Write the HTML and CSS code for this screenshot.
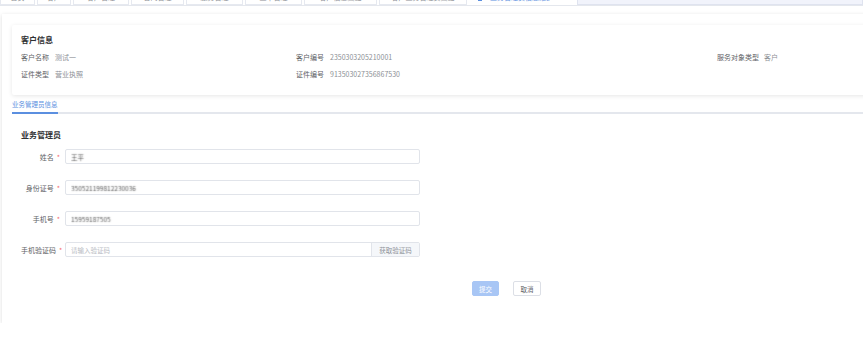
FILE: index.html
```html
<!DOCTYPE html>
<html lang="zh-CN">
<head>
  <meta charset="UTF-8" />
  <meta name="viewport" content="width=device-width, initial-scale=1.0" />
  <title>业务管理员信息</title>
  <link rel="stylesheet" href="styles.css">
</head>
<body>
  <div class="tabbar">
    <div class="tab" style="width:35px"><span>首页</span></div>
    <div class="tab" style="width:34px"><span>客户</span></div>
    <div class="tab" style="width:56px"><span>客户管理</span></div>
    <div class="tab" style="width:53px"><span>合同管理</span></div>
    <div class="tab" style="width:57px"><span>服务管理</span></div>
    <div class="tab" style="width:57px"><span>工单管理</span></div>
    <div class="tab" style="width:73px"><span>客户信息变更</span></div>
    <div class="tab" style="width:88px"><span>客户业务管理员变更</span></div>
    <div class="tab active" style="width:106px"><i class="tab-icon"></i><span>业务管理员信息维护</span></div>
    <div class="tab-rest"></div>
  </div>

  <div class="page">
    <div class="panel">
      <div class="info-card">
        <div class="card-title">客户信息</div>
        <div class="info-grid">
          <div class="info-item"><span class="info-label">客户名称</span><span class="info-value">测试一</span></div>
          <div class="info-item"><span class="info-label">客户编号</span><span class="info-value">2350303205210001</span></div>
          <div class="info-item"><span class="info-label wide">服务对象类型</span><span class="info-value">客户</span></div>
          <div class="info-item"><span class="info-label">证件类型</span><span class="info-value">营业执照</span></div>
          <div class="info-item"><span class="info-label">证件编号</span><span class="info-value">913503027356867530</span></div>
        </div>
      </div>

      <div class="subtabs">
        <div class="subtab active">业务管理员信息</div>
      </div>

      <div class="section">
        <div class="section-title">业务管理员</div>
        <form class="form">
          <div class="form-row">
            <label class="form-label">姓名<em>*</em></label>
            <div class="input"><input class="blur" value="王平"></div>
          </div>
          <div class="form-row">
            <label class="form-label">身份证号<em>*</em></label>
            <div class="input"><input class="blur" value="350521199812230036"></div>
          </div>
          <div class="form-row">
            <label class="form-label">手机号<em>*</em></label>
            <div class="input"><input class="blur" value="15959187505"></div>
          </div>
          <div class="form-row">
            <label class="form-label">手机验证码<em>*</em></label>
            <div class="input"><input placeholder="请输入验证码"><button type="button" class="append">获取验证码</button></div>
          </div>
          <div class="actions">
            <button type="button" class="btn primary">提交</button>
            <button type="button" class="btn">取消</button>
          </div>
        </form>
      </div>
    </div>
  </div>
</body>
</html>
```

FILE: styles.css
```css
* {
  box-sizing: border-box;
}

body {
  margin: 0;
  overflow: hidden;
  background: #fff;
  font-family: "Noto Sans CJK SC", "Noto Sans", sans-serif;
  font-size: 7px;
  color: #606266;
}

/* top tab strip, mostly scrolled out of view */
.tabbar {
  display: flex;
  height: 6px;
  border-bottom: 1px solid #e4e7ed;
  overflow: hidden;
}

.tab {
  flex-shrink: 0;
  display: flex;
  align-items: flex-end;
  justify-content: center;
  height: 5px;
  margin-right: 2px;
  border: 1px solid #e6e9f0;
  border-top: none;
  background: #fff;
  color: #8a8d93;
}

.tab span {
  line-height: 10px;
  margin-bottom: 2px;
}

.tab.active {
  justify-content: flex-start;
  padding-left: 8px;
  gap: 8px;
  color: #5b8fe0;
  border-color: #fff;
}

.tab-icon {
  width: 4px;
  height: 2px;
  margin-bottom: 3px;
  background: #5b8fe0;
}

.tab-rest {
  flex: 1;
  height: 5px;
  background: #f1f3fb;
  border: 1px solid #dfe3ef;
  border-top: none;
}

.page {
  padding: 8px 0 0 2px;
}

.panel {
  width: 900px;
  height: 309px;
  padding: 11px 0 0 10px;
  background: #fff;
  box-shadow: 0 1px 4px rgba(0, 0, 0, 0.14);
}

/* customer info card */
.info-card {
  height: 70px;
  padding: 10px 9px;
  border-radius: 2px;
  box-shadow: 0 1px 4px rgba(0, 0, 0, 0.1);
}

.card-title,
.section-title {
  font-size: 8px;
  line-height: 10px;
  font-weight: bold;
  color: #303133;
}

.info-grid {
  display: grid;
  grid-template-columns: 275px 421px auto;
  row-gap: 7px;
  margin-top: 7px;
  line-height: 10px;
}

.info-item {
  display: flex;
}

.info-label {
  width: 34px;
  color: #606266;
}

.info-label.wide {
  width: 47px;
}

.info-value {
  color: #8c8f95;
}

/* sub tabs */
.subtabs {
  display: flex;
  margin-top: 4px;
  border-bottom: 2px solid #e4e7ed;
}

.subtab {
  line-height: 10px;
  padding-bottom: 3px;
  margin-bottom: -2px;
  font-size: 6.5px;
  color: #5b8fe0;
}

.subtab.active {
  border-bottom: 2px solid #5b8fe0;
}

/* form */
.section {
  padding: 16px 0 0 9px;
}

.form {
  display: flex;
  flex-direction: column;
  gap: 16px;
  margin-top: 9px;
}

.form-row {
  display: flex;
  align-items: center;
  gap: 5px;
  height: 15px;
}

.form-label {
  width: 39px;
  text-align: right;
  color: #606266;
  white-space: nowrap;
}

.form-label em {
  font-style: normal;
  color: #f56c6c;
  margin-left: 3px;
}

.input {
  display: flex;
  width: 355px;
  height: 15px;
  border: 1px solid #e1e4ea;
  border-radius: 2px;
  overflow: hidden;
}

.input input {
  flex: 1;
  min-width: 0;
  padding: 0 5px;
  border: none;
  outline: none;
  font-family: inherit;
  font-size: 6.5px;
  color: #606266;
  background: transparent;
}

.input input::placeholder {
  color: #b9bcc3;
}

.input input.blur {
  color: transparent;
  text-shadow: 0 0 1.2px #555;
}

.append {
  width: 48px;
  padding: 0;
  border: none;
  border-left: 1px solid #e1e4ea;
  background: #f5f7fa;
  font-family: inherit;
  font-size: 6.5px;
  color: #909399;
}

.actions {
  display: flex;
  gap: 14px;
  margin: 8px 0 0 451px;
}

.btn {
  width: 28px;
  height: 15px;
  padding: 0;
  border: 1px solid #dcdfe6;
  border-radius: 2px;
  background: #fff;
  font-family: inherit;
  font-size: 6.5px;
  color: #606266;
}

.btn.primary {
  width: 27px;
  border-color: #a8c6f5;
  background: #a8c6f5;
  color: #fff;
}
```
